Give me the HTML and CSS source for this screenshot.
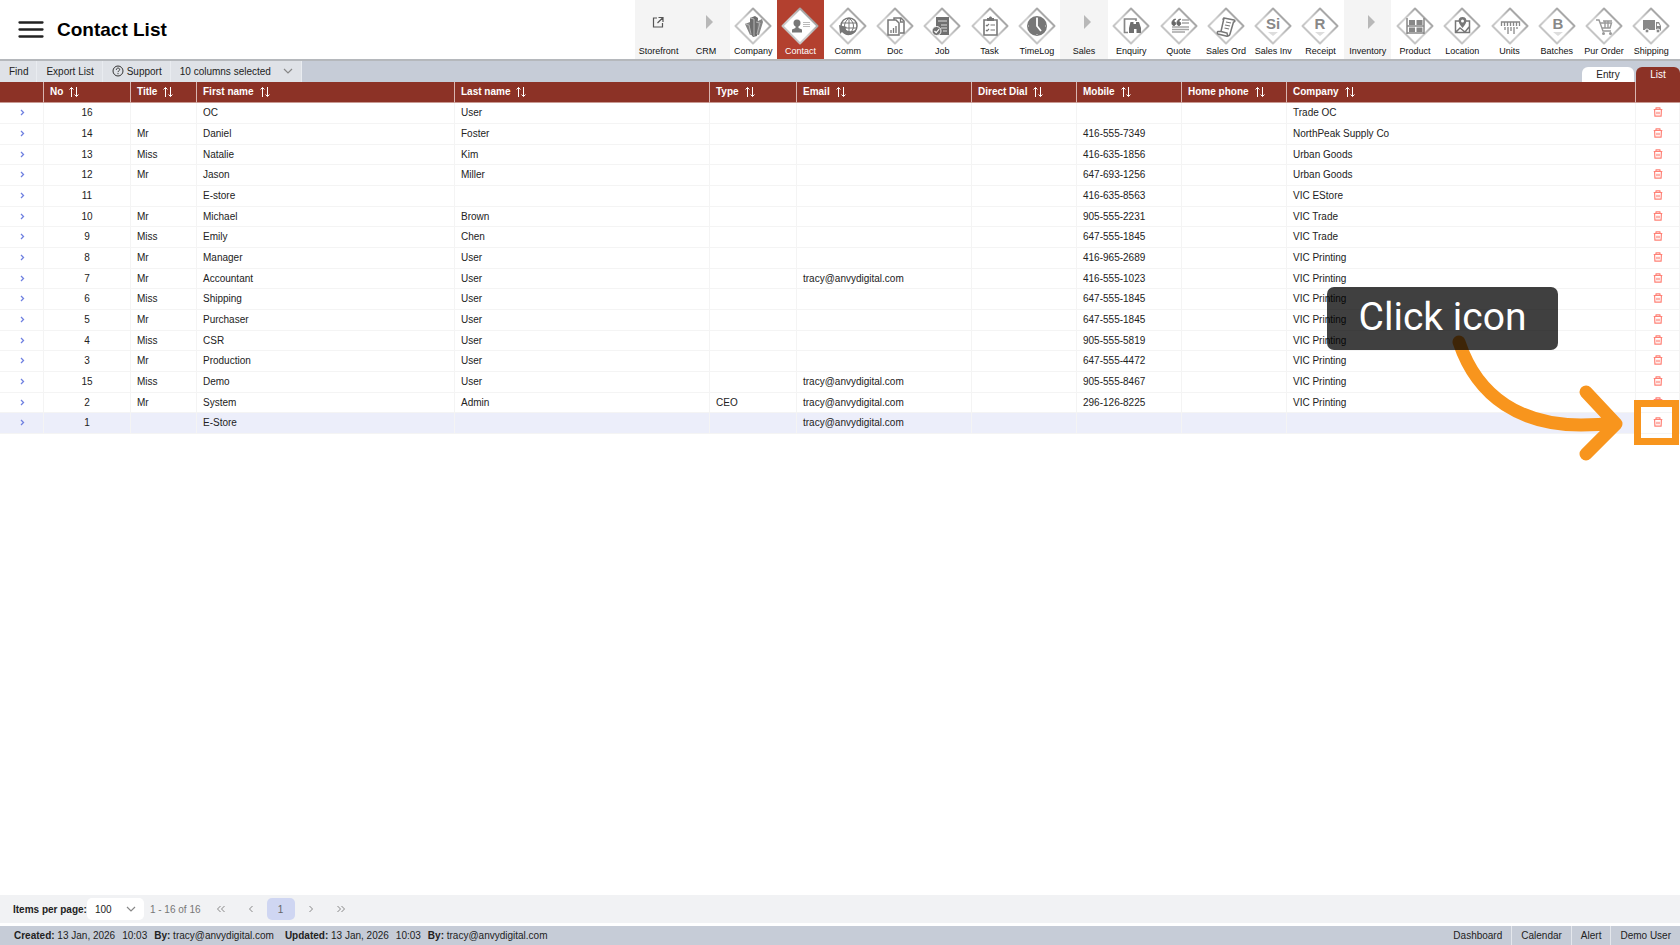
FILE: index.html
```html
<!DOCTYPE html>
<html lang="en">
<head>
  <meta charset="utf-8">
  <title>Contact List</title>
  <link rel="stylesheet" href="styles.css">
</head>
<body>
  <!-- shared icon shapes -->
  <svg class="sprite" aria-hidden="true">
    <defs>
      <linearGradient id="edge" x1="0" y1="1" x2="1" y2="0">
        <stop offset="0" stop-color="#b4b4b4"/>
        <stop offset="0.45" stop-color="#d2d2d2"/>
        <stop offset="1" stop-color="#858585"/>
      </linearGradient>
      <symbol id="diamond" viewBox="0 0 38 38">
        <path d="M19 1.5 36.5 19 19 36.5 1.5 19Z" fill="#fff" stroke="url(#edge)" stroke-width="2" stroke-linejoin="round"/>
      </symbol>
      <symbol id="sort" viewBox="0 0 10 12">
        <path d="M2.5 11V1.5M.5 3.5l2-2 2 2M7.5 1v9.5M5.5 8.5l2 2 2-2" fill="none" stroke="currentColor" stroke-width="1"/>
      </symbol>
      <symbol id="trash" viewBox="0 0 10 10">
        <path d="M.7 2.5h8.6M3 2.3V.8h4v1.5M1.6 2.7l.3 6.5h6.2l.3-6.5M4 4.7v2.6M6 4.7v2.6" fill="none" stroke="currentColor" stroke-width="1.2" stroke-linejoin="round"/>
      </symbol>
      <symbol id="down" viewBox="0 0 10 6">
        <path d="M1 1l4 4 4-4" fill="none" stroke="currentColor" stroke-width="1.2"/>
      </symbol>
    </defs>
  </svg>

  <header class="header">
    <button class="menu" aria-label="Menu">
      <svg viewBox="0 0 26 18"><path d="M1.5 1.5h23M1.5 8.500h23M1.5 15.500h23" stroke="#222" stroke-width="2.3" stroke-linecap="round"/></svg>
    </button>
    <h1>Contact List</h1>
    <nav class="modules" id="modules"></nav>
  </header>

  <div class="toolbar">
    <button class="tool">Find</button>
    <button class="tool">Export List</button>
    <button class="tool">
      <svg class="help" viewBox="0 0 12 12" fill="none" stroke="#333"><circle cx="6" cy="6" r="5"/><path d="M4.3 4.8c0-2.3 3.4-2.2 3.4-.2C7.7 5.8 6 5.8 6 7.1M6 8.1v1.1"/></svg>
      Support
    </button>
    <div class="columns">
      <select aria-label="Columns"><option>10 columns selected</option></select>
      <svg class="caret"><use href="#down"/></svg>
    </div>
    <div class="tabs">
      <button class="tab">Entry</button>
      <button class="tab active">List</button>
    </div>
  </div>

  <main class="content">
    <table class="contacts">
      <colgroup>
        <col class="c-toggle"><col class="c-no"><col class="c-title"><col class="c-first"><col class="c-last"><col class="c-type">
        <col class="c-email"><col class="c-phone"><col class="c-phone"><col class="c-phone"><col class="c-company"><col class="c-delete">
      </colgroup>
      <thead><tr id="head"></tr></thead>
      <tbody id="rows"></tbody>
    </table>

    <div class="highlight"></div>
    <svg class="arrow" viewBox="0 0 180 140">
      <path d="M12 14C31 71 76 97 134 97Q152 97 168 95M139 64l30 32-30 30" fill="none" stroke="#f8951d" stroke-width="13" stroke-linecap="round" stroke-linejoin="round"/>
    </svg>
    <div class="callout">Click icon</div>
  </main>

  <div class="pager">
    <label for="page-size">Items per page:</label>
    <div class="page-size">
      <select id="page-size"><option>100</option></select>
      <svg class="caret"><use href="#down"/></svg>
    </div>
    <span class="range">1 - 16 of 16</span>
    <button class="page" aria-label="First page"><svg viewBox="0 0 10 8"><path d="M4.5 1l-3 3 3 3M8.5 1l-3 3 3 3"/></svg></button>
    <button class="page" aria-label="Previous page"><svg viewBox="0 0 10 8"><path d="M6.5 1l-3 3 3 3"/></svg></button>
    <button class="page current">1</button>
    <button class="page" aria-label="Next page"><svg viewBox="0 0 10 8"><path d="M3.5 1l3 3-3 3"/></svg></button>
    <button class="page" aria-label="Last page"><svg viewBox="0 0 10 8"><path d="M1.5 1l3 3-3 3M5.5 1l3 3-3 3"/></svg></button>
  </div>

  <footer class="footer">
    <div class="audit">
      <span><b>Created:</b> 13 Jan, 2026</span>
      <span>10:03</span>
      <span class="by"><b>By:</b> tracy@anvydigital.com</span>
      <span><b>Updated:</b> 13 Jan, 2026</span>
      <span>10:03</span>
      <span><b>By:</b> tracy@anvydigital.com</span>
    </div>
    <a href="#">Dashboard</a>
    <a href="#">Calendar</a>
    <a href="#">Alert</a>
    <a href="#">Demo User</a>
  </footer>

  <script src="script.js"></script>
</body>
</html>
```
FILE: styles.css
```css
* {
  margin: 0;
  padding: 0;
  box-sizing: border-box;
}

body {
  min-height: 100vh;
  display: flex;
  flex-direction: column;
  font-family: "Liberation Sans", Arial, sans-serif;
  font-size: 10px;
  color: #222;
  background: #fff;
}

button,
select {
  font: inherit;
  color: inherit;
  border: none;
  background: none;
  cursor: pointer;
}

select {
  appearance: none;
  width: 100%;
  height: 100%;
}

a {
  color: inherit;
  text-decoration: none;
}

svg {
  display: block;
}

.sprite {
  position: absolute;
  width: 0;
  height: 0;
}

/* header */
.header {
  display: flex;
  align-items: center;
  height: 61px;
  padding: 0 5px 0 18px;
  border-bottom: 2px solid #b5b8bc;
}

.menu {
  width: 26px;
  height: 18px;
}

.header h1 {
  margin-left: 13px;
  font-size: 19px;
  line-height: 24px;
  color: #000;
}

.modules {
  display: grid;
  grid-template-columns: repeat(22, 1fr);
  width: 1040px;
  height: 100%;
  margin-left: auto;
}

.module {
  display: flex;
  flex-direction: column;
  align-items: center;
  padding-top: 7px;
  font-size: 9px;
  line-height: 12px;
  white-space: nowrap;
  color: #111;
}

.module svg {
  width: 38px;
  height: 38px;
}

.module .letter {
  font-size: 15px;
  font-weight: bold;
  fill: #888;
}

.module.group {
  background: #f4f4f4;
}

.module.active {
  background: #b3402f;
  color: #fff;
}

/* toolbar */
.toolbar {
  display: flex;
  height: 21px;
  background: #c6ccd7;
}

.tool,
.columns {
  display: flex;
  align-items: center;
  gap: 3px;
  padding: 0 8px 1px 9px;
  background: #dfe2e7;
  border-right: 1px solid #e9ecf0;
}

.columns {
  width: 131px;
}

.caret {
  flex: none;
  width: 10px;
  height: 6px;
  color: #888;
  pointer-events: none;
}

.help {
  width: 12px;
  height: 12px;
}

.tabs {
  display: flex;
  align-items: flex-end;
  gap: 2px;
  margin-left: auto;
}

.tab {
  width: 52px;
  height: 15px;
  padding-bottom: 1px;
  border-radius: 6px 6px 0 0;
  background: #fff;
}

.tab.active {
  width: 44px;
  background: #8c3226;
  color: #fff;
}

/* contact table */
.content {
  position: relative;
  flex: 1;
}

.contacts {
  width: 100%;
  table-layout: fixed;
  border-collapse: separate;
  border-spacing: 0;
  line-height: 12px;
}

.c-toggle, .c-delete { width: 44px; }
.c-no, .c-type { width: 87px; }
.c-title { width: 66px; }
.c-first { width: 258px; }
.c-last { width: 255px; }
.c-email { width: 175px; }
.c-phone { width: 105px; }

.contacts th {
  height: 21px;
  padding: 0 6px;
  text-align: left;
  color: #fff;
  background: #8c3226;
  border-right: 1px solid #d9b5b0;
  border-bottom: 1px solid #c99a93;
}

.contacts th:last-child {
  border-right: none;
}

.th {
  display: flex;
  align-items: center;
  gap: 6px;
}

.th svg {
  width: 10px;
  height: 12px;
}

.contacts td {
  height: 21px;
  padding: 0 6px;
  white-space: nowrap;
  border-right: 1px solid #f4f4f4;
  border-bottom: 1px solid #f4f4f4;
}

.contacts tr:nth-child(3n) td {
  height: 20px;
}

.contacts td:nth-child(2) {
  text-align: center;
}

.contacts tr.selected td {
  background: #eceefa;
}

.contacts tr.selected td:last-child {
  background: #fff;
}

.row-button {
  display: block;
  width: 10px;
  height: 10px;
  margin: 0 auto;
}

.contacts td:last-child {
  padding-bottom: 2px;
}

.expand { color: #6f80e0; }
.delete { color: #ff8176; }

/* guide overlay */
.callout {
  position: absolute;
  top: 205px;
  right: 122px;
  width: 231px;
  height: 63px;
  border-radius: 7px;
  background: rgba(0, 0, 0, 0.75);
  color: #fff;
  font-family: Roboto, Inter, sans-serif;
  font-size: 39px;
  line-height: 60px;
  text-align: center;
}

.arrow {
  position: absolute;
  top: 246px;
  right: 53px;
  width: 180px;
  height: 140px;
}

.highlight {
  position: absolute;
  top: 318px;
  right: 1px;
  width: 45px;
  height: 45px;
  border: 7px solid #f8951d;
}

/* pager */
.pager {
  display: flex;
  align-items: center;
  height: 28px;
  margin-bottom: 3px;
  padding-left: 13px;
  background: #f1f2f4;
}

.pager label {
  font-weight: bold;
}

.page-size {
  display: flex;
  align-items: center;
  width: 57px;
  height: 22px;
  padding: 0 8px;
  border-radius: 5px;
  background: #fff;
}

.range {
  margin: 0 6px;
  color: #777;
}

.page {
  width: 28px;
  height: 22px;
  margin-right: 2px;
  border-radius: 5px;
  color: #666;
}

.page.current {
  background: #cfd6f2;
}

.page svg {
  width: 10px;
  height: 8px;
  margin: 0 auto;
  fill: none;
  stroke: #888;
}

/* footer */
.footer {
  display: flex;
  height: 19px;
  line-height: 20px;
  background: #c6ccd7;
}

.audit {
  display: flex;
  gap: 7px;
  margin-right: auto;
  padding-left: 14px;
}

.audit .by {
  margin-right: 4px;
}

.footer a {
  padding: 0 9px;
  border-right: 1px solid #e4e7ec;
}

.footer a:last-child {
  border-right: none;
}
```
FILE: script.js
```js
// artwork drawn inside each 38x38 diamond
const art = {
  Company: '<path d="M11 17l5-2 2 2v10l-2 1zM22 15l6-3 1 3-4 13-4-1z" fill="#858585"/><path d="M16 11l5-2 3 2-1 18-4 1-3-4z" fill="#6d6d6d"/><path d="M16 11l4 1v17M11 17l4 1 2 9M22 15l4 1-3 11" fill="none" stroke="#b5b5b5" stroke-width="1"/>',
  Contact: '<circle cx="16" cy="16" r="3.5" fill="#777"/><path d="M14.5 18h3v3l3.5 1.500v3H11v-3l3.500-1.500z" fill="#777"/><path d="M22 15.500h7M22 17.500h7M22 19.500h7" stroke="#bbb"/>',
  Comm: '<circle cx="20" cy="19" r="8" fill="#fff" stroke="#777" stroke-width="1.5"/><path d="M12 16h16M12 21h16M20 11v16M20 11c-6 5-6 11 0 16M20 11c6 5 6 11 0 16" fill="none" stroke="#777"/><path d="M10 18l8 2-2 2c3 3 8 3 12 0-3 7-11 8-15 3l-2 2z" fill="#777"/>',
  Doc: '<path d="M18 13v-2h7l3 3v12h-4" fill="none" stroke="#777" stroke-width="1.5"/><path d="M12 13h8l3 3v12H12z" fill="#fff" stroke="#777" stroke-width="1.5"/><path d="M15 26v-3M17.5 26v-5M20 26v-7M24.5 11v4h3" fill="none" stroke="#777" stroke-width="1.3"/>',
  Job: '<path d="M13 10h13v18H13z" fill="#707070"/><path d="M15 14h9M18 18h6M18 21h6M20 24h4" stroke="#ddd" stroke-width="1.2"/><circle cx="13.5" cy="24" r="4.5" fill="#707070" stroke="#fff"/><path d="M11.5 24l1.7 1.7 3-3.5" fill="none" stroke="#fff" stroke-width="1.2"/>',
  Task: '<path d="M13 13h13v15H13z" fill="#fff" stroke="#777" stroke-width="1.6"/><path d="M16 14v-3h2c0-2 3-2 3 0h2v3z" fill="#777"/><path d="M15 18l1 1 2-2M15 23l1 1 2-2M19.5 18H24M19.5 23H24" fill="none" stroke="#777" stroke-width="1.2"/>',
  TimeLog: '<circle cx="19" cy="19" r="10" fill="#777"/><path d="M19 11v8l4 5" fill="none" stroke="#fff" stroke-width="1.8"/><path d="M19 10v1M10 19h1M27 19h1M19 27v1" stroke="#ddd"/>',
  Enquiry: '<path d="M16 25.500h-3.500V12H24v2" fill="none" stroke="#888" stroke-width="1.7"/><path d="M18.500 15h3v2h2.500v-2h3l2 6v5h-4.500v-4h-2.500v4H17v-5z" fill="#6f6f6f"/>',
  Quote: '<path d="M22 13h7M22 16h7M12 20h17M12 22.5h17M12 25h13" stroke="#a5a5a5" stroke-width="1.3"/><path d="M15.5 12c-5 1-4 7-1.5 6.500 2.500-.5 2-4-.3-3.700.2-1.300.8-2 1.800-2.300zM20.5 12c-5 1-4 7-1.5 6.500 2.500-.5 2-4-.3-3.700.2-1.300.8-2 1.800-2.300z" fill="#666" stroke="#666"/>',
  'Sales Ord': '<path d="M17 11l10 2c1.5.5 1 2-.5 2L23 27c-.5 2-2 2.500-4 2l-8-2c-1-.5-1-2 0-2.500h3zM14 24.500l6 1.500c0 2 .5 2.500 1.500 3M17 11c-1 0-1 1-1 2" fill="#fff" stroke="#777" stroke-width="1.5"/><path d="M19 15l5 1M18 18l5 1M17.5 21l4.500 1" stroke="#777" stroke-width="1.2"/>',
  'Sales Inv': '<text x="19" y="22" text-anchor="middle" class="letter">Si</text><path d="M14 25h10l-5 4z" fill="#ddd"/>',
  Receipt: '<text x="19" y="22" text-anchor="middle" class="letter">R</text><path d="M14 25h10l-5 4z" fill="#ddd"/>',
  Product: '<path d="M11 11v16M28 11v16M11 19h17M11 26h17" stroke="#888" stroke-width="1.5"/><path d="M13 13h6v5h-6zM20.5 13h6v5h-6zM13 20.500h6V25h-6zM20.5 20.500h6V25h-6z" fill="#888"/>',
  Location: '<path d="M16 14h-3.500v11.500h14V14H23M13 25l4-4 5 4 4-5" fill="none" stroke="#777" stroke-width="1.5"/><path d="M19.5 21c-7-8-3-11 0-11s7 3 0 11z" fill="#777"/><circle cx="19.5" cy="14" r="1.5" fill="#fff"/>',
  Units: '<path d="M10.5 19v-4h18v4M13.5 15v4M16.5 15v4M19.5 15v4M22.5 15v4M25.5 15v4" fill="none" stroke="#888" stroke-width="1.3"/><path d="M14 20v3M17 20v7M20 20v4M23 20v7M26 20v2" stroke="#999" stroke-width="1.5"/>',
  Batches: '<text x="20" y="22" text-anchor="middle" class="letter">B</text><path d="M15 25h10l-5 4z" fill="#ddd"/>',
  'Pur Order': '<path d="M11 13h3l4 11h8M15.5 16h11l-1.500 5h-8M18 14h9M20 14v7M23 14v7" fill="none" stroke="#999" stroke-width="1.4"/><circle cx="18.5" cy="26.5" r="1.5" fill="#999"/><circle cx="25.5" cy="26.5" r="1.5" fill="#999"/>',
  Shipping: '<path d="M11 13h12v10H11zM24 15h3l2 4v5h-5z" fill="#888"/><path d="M25 16.500h1.500l1.500 2.500h-3z" fill="#fff"/><circle cx="15" cy="24" r="2" fill="#888" stroke="#fff"/><circle cx="26" cy="24" r="2" fill="#888" stroke="#fff"/>'
};

const play = '<path d="M19 8l7 7-7 7z" fill="#b8b8b8"/>';
const modules = ['Storefront', 'CRM', 'Company', 'Contact', 'Comm', 'Doc', 'Job', 'Task', 'TimeLog', 'Sales', 'Enquiry',
  'Quote', 'Sales Ord', 'Sales Inv', 'Receipt', 'Inventory', 'Product', 'Location', 'Units', 'Batches', 'Pur Order', 'Shipping'];

function drawModule(name) {
  let icon = '<use href="#diamond"/>' + art[name];
  let type = '';
  if (!art[name]) {
    type = ' group';
    icon = name === 'Storefront'
      ? '<path d="M17 11h-3.500v9h9v-4M18.5 10.500h4.500V15M23 10.500l-5.500 5.500" fill="none" stroke="#555" stroke-width="1.2"/>'
      : play;
  }
  if (name === 'Contact') type = ' active';
  return `<a href="#" class="module${type}"><svg viewBox="0 0 38 38">${icon}</svg>${name}</a>`;
}

document.getElementById('modules').innerHTML = modules.map(drawModule).join('');

const headings = ['', 'No', 'Title', 'First name', 'Last name', 'Type', 'Email', 'Direct Dial', 'Mobile', 'Home phone', 'Company', ''];

document.getElementById('head').innerHTML = headings
  .map(h => h ? `<th><div class="th">${h}<svg><use href="#sort"/></svg></div></th>` : '<th></th>')
  .join('');

// no, title, first name, last name, type, email, mobile, company
const email = 'tracy@anvydigital.com';
const contacts = [
  [16, '', 'OC', 'User', '', '', '', 'Trade OC'],
  [14, 'Mr', 'Daniel', 'Foster', '', '', '416-555-7349', 'NorthPeak Supply Co'],
  [13, 'Miss', 'Natalie', 'Kim', '', '', '416-635-1856', 'Urban Goods'],
  [12, 'Mr', 'Jason', 'Miller', '', '', '647-693-1256', 'Urban Goods'],
  [11, '', 'E-store', '', '', '', '416-635-8563', 'VIC EStore'],
  [10, 'Mr', 'Michael', 'Brown', '', '', '905-555-2231', 'VIC Trade'],
  [9, 'Miss', 'Emily', 'Chen', '', '', '647-555-1845', 'VIC Trade'],
  [8, 'Mr', 'Manager', 'User', '', '', '416-965-2689', 'VIC Printing'],
  [7, 'Mr', 'Accountant', 'User', '', email, '416-555-1023', 'VIC Printing'],
  [6, 'Miss', 'Shipping', 'User', '', '', '647-555-1845', 'VIC Printing'],
  [5, 'Mr', 'Purchaser', 'User', '', '', '647-555-1845', 'VIC Printing'],
  [4, 'Miss', 'CSR', 'User', '', '', '905-555-5819', 'VIC Printing'],
  [3, 'Mr', 'Production', 'User', '', '', '647-555-4472', 'VIC Printing'],
  [15, 'Miss', 'Demo', 'User', '', email, '905-555-8467', 'VIC Printing'],
  [2, 'Mr', 'System', 'Admin', 'CEO', email, '296-126-8225', 'VIC Printing'],
  [1, '', 'E-Store', '', '', email, '', '']
];

document.getElementById('rows').innerHTML = contacts.map(([no, title, first, last, type, mail, mobile, company]) => {
  const cells = [no, title, first, last, type, mail, '', mobile, '', company].map(c => `<td>${c}</td>`).join('');
  return `<tr${no === 1 ? ' class="selected"' : ''}>
    <td><button class="row-button expand" aria-label="Expand"><svg viewBox="0 0 10 10"><path d="M4 2l2.5 2.5L4 7" fill="none" stroke="currentColor" stroke-width="1.3"/></svg></button></td>
    ${cells}
    <td><button class="row-button delete" aria-label="Delete"><svg viewBox="0 0 10 10"><use href="#trash"/></svg></button></td>
  </tr>`;
}).join('');
```
